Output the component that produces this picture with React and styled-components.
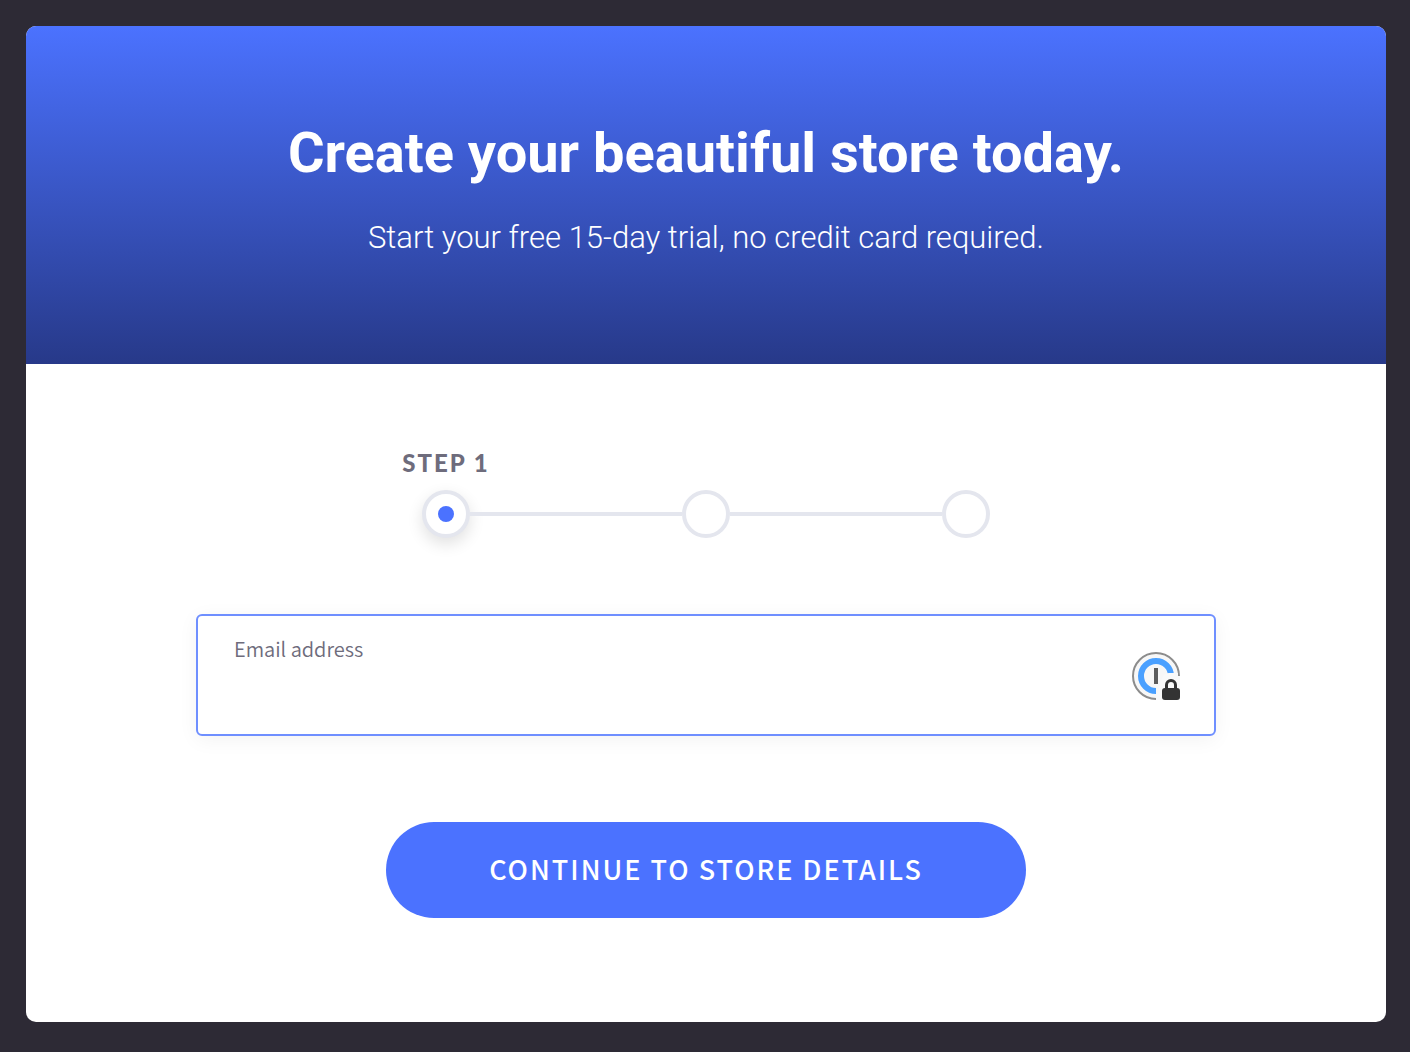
import React, { useState } from "react";
import styled, { createGlobalStyle, css } from "styled-components";

const GlobalStyle = createGlobalStyle`
  *, *::before, *::after { box-sizing: border-box; }
  body {
    margin: 0;
    background: #2d2a35;
    font-family: "Noto Sans CJK SC", "Noto Sans", sans-serif;
    color: #6e6c7c;
  }
`;

const Page = styled.div`
  display: flex;
  flex-direction: column;
  min-height: 100vh;
  padding: 26px 24px 30px 26px;
`;

const Card = styled.main`
  flex: 1;
  overflow: hidden;
  border-radius: 10px;
  background: #fff;
`;

const Header = styled.header`
  padding: 87px 24px 101px;
  background: linear-gradient(#4b72ff, #273989);
  color: #fff;
  text-align: center;
`;

const Title = styled.h1`
  margin: 0 0 20px;
  font-family: Roboto, sans-serif;
  font-size: 56px;
  font-weight: 700;
  line-height: 80px;
`;

const Subtitle = styled.p`
  margin: 0;
  font-family: Roboto, sans-serif;
  font-size: 31px;
  font-weight: 300;
  line-height: 50px;
`;

const Form = styled.form`
  display: flex;
  flex-direction: column;
  align-items: center;
  padding: 84px 24px 104px;
`;

const Steps = styled.ol`
  display: flex;
  align-items: flex-end;
  width: 100%;
  max-width: 568px;
  margin: 0 0 76px;
  padding: 0;
  list-style: none;
`;

const Step = styled.li`
  display: flex;
  flex: none;
  flex-direction: column;
  align-items: center;
  width: 48px;
`;

const StepLabel = styled.span`
  margin-bottom: 12px;
  font-family: Lato, sans-serif;
  font-size: 24px;
  font-weight: 900;
  letter-spacing: 2px;
  line-height: 30px;
  white-space: nowrap;
`;

const Marker = styled.span`
  display: grid;
  place-items: center;
  width: 48px;
  height: 48px;
  border: 4px solid #e4e6ee;
  border-radius: 50%;
  background: #fff;
  ${({ $active }) =>
    $active &&
    css`
      box-shadow: 0 6px 16px rgba(0, 0, 0, 0.12);
      &::after {
        content: "";
        width: 16px;
        height: 16px;
        border-radius: 50%;
        background: #4b72ff;
      }
    `}
`;

const Connector = styled.li`
  flex: 1;
  height: 4px;
  margin-bottom: 22px;
  background: #e4e6ee;
`;

const Field = styled.div`
  display: flex;
  align-items: center;
  width: 100%;
  max-width: 1020px;
  margin-bottom: 86px;
  padding: 16px 34px 14px 36px;
  border: 2px solid #6f8fff;
  border-radius: 6px;
  background: #fff;
  box-shadow: 0 4px 20px rgba(0, 0, 0, 0.05);
`;

const FieldText = styled.div`
  display: flex;
  flex: 1;
  flex-direction: column;
`;

const FieldLabel = styled.label`
  font-size: 20px;
  font-weight: 350;
  line-height: 34px;
`;

const EmailInput = styled.input`
  width: 100%;
  height: 54px;
  padding: 0;
  border: 0;
  outline: 0;
  background: transparent;
  color: #2d2a35;
  font-family: inherit;
  font-size: 28px;
`;

const IconButton = styled.button`
  display: block;
  flex: none;
  padding: 0;
  border: 0;
  background: transparent;
  cursor: pointer;

  svg { display: block; }
`;

const SubmitButton = styled.button`
  width: 100%;
  max-width: 640px;
  height: 96px;
  padding: 0 0 4px;
  border: 0;
  border-radius: 48px;
  background: #4b72ff;
  color: #fff;
  font-family: inherit;
  font-size: 27px;
  font-weight: 500;
  letter-spacing: 2px;
  text-transform: uppercase;
  cursor: pointer;
`;

function PasswordIcon() {
  return (
    <svg width="48" height="48" viewBox="0 0 48 48" fill="none" aria-hidden="true">
      <circle cx="24" cy="24" r="23" fill="#f7f7f7" />
      <path d="M47 24A23 23 0 1 0 24 47" stroke="#8c8c8c" strokeWidth="2" />
      <path d="M39 24A15 15 0 1 0 24 39" stroke="#4aa0ff" strokeWidth="6" />
      <path d="M24 48V42C28 42 27 21 37 21H46V24H48V48Z" fill="#f9f9f9" />
      <rect x="22" y="16" width="4" height="16" fill="#5c5c5c" />
      <path d="M34.5 38V33a4.5 4.5 0 0 1 9 0v5" stroke="#333" strokeWidth="3" />
      <rect x="30" y="36" width="18" height="12" rx="3" fill="#333" />
    </svg>
  );
}

export default function App() {
  const [email, setEmail] = useState("");

  return (
    <>
      <GlobalStyle />
      <Page>
        <Card>
          <Header>
            <Title>Create your beautiful store today.</Title>
            <Subtitle>Start your free 15-day trial, no credit card required.</Subtitle>
          </Header>
          <Form onSubmit={(event) => event.preventDefault()}>
            <Steps>
              <Step aria-current="step">
                <StepLabel>STEP 1</StepLabel>
                <Marker $active />
              </Step>
              <Connector aria-hidden="true" />
              <Step><Marker /></Step>
              <Connector aria-hidden="true" />
              <Step><Marker /></Step>
            </Steps>
            <Field>
              <FieldText>
                <FieldLabel htmlFor="email">Email address</FieldLabel>
                <EmailInput
                  id="email"
                  type="email"
                  value={email}
                  onChange={(event) => setEmail(event.target.value)}
                />
              </FieldText>
              <IconButton type="button" aria-label="Fill from password manager">
                <PasswordIcon />
              </IconButton>
            </Field>
            <SubmitButton type="submit">Continue to store details</SubmitButton>
          </Form>
        </Card>
      </Page>
    </>
  );
}
